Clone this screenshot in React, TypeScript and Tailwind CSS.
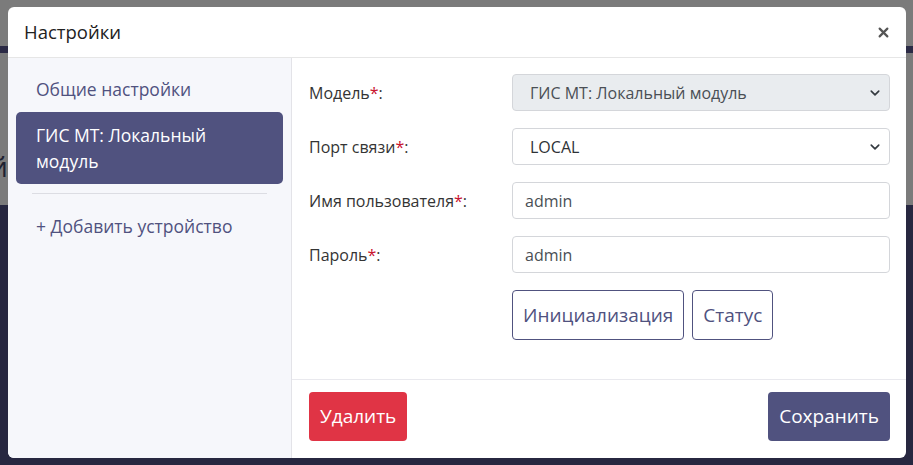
import React from "react";

const Chevron = () => (
  <svg width="12" height="10" viewBox="0 0 16 16" className="absolute right-[8px] top-1/2 -translate-y-1/2">
    <path d="M2 5l6 6 6-6" fill="none" stroke="#343a40" strokeWidth="2.6" strokeLinecap="round" strokeLinejoin="round" />
  </svg>
);

function Label({ text }: { text: string }) {
  return (
    <div className="w-[203px] shrink-0 text-[16px] text-[#343434]">
      {text}
      <span className="text-[#c8102e]">*</span>:
    </div>
  );
}

export default function App() {
  return (
    <div
      className="relative w-[913px] h-[465px] overflow-hidden bg-[#272740]"
      style={{ fontFamily: '"Open Sans", "Noto Sans", sans-serif' }}
    >
      <div className="flex flex-col">
        <div className="h-[46px] bg-[#7b7b7b]" />
        <div className="h-[7px] bg-[#2b2a45]" />
        <div className="h-[152px] bg-[#7b7b7b]" />
      </div>
      <span className="absolute left-[-10px] top-[146px] text-[28px] leading-[40px] text-[#1e2232]">й</span>

      <div className="absolute left-[8px] top-[7px] w-[898px] h-[451px] bg-white rounded-[6px] overflow-hidden flex flex-col">
        <div className="h-[51px] shrink-0 flex items-center justify-between pl-[16px] pr-[17px] border-b border-[#e6e6e6]">
          <div className="text-[18.5px] text-[#222]">Настройки</div>
          <svg width="11" height="11" viewBox="0 0 10 10">
            <path d="M1.5 1.5l7 7M8.5 1.5l-7 7" stroke="#555" strokeWidth="2" strokeLinecap="round" />
          </svg>
        </div>
        <div className="flex flex-1 min-h-0">
          <div className="w-[284px] shrink-0 bg-[#f6f7fb] border-r border-[#e3e3e8] px-[8px] pt-[8px]">
            <div className="px-[20px] py-[10px] leading-[26px] text-[17.5px] text-[#50527f]">Общие настройки</div>
            <div className="px-[20px] py-[10px] leading-[26px] text-[17.5px] text-white bg-[#50527f] rounded-[5px]">
              ГИС МТ: Локальный
              <br />
              модуль
            </div>
            <div className="mx-[16px] my-[9px] border-t border-[#dcdde3]" />
            <div className="px-[20px] py-[10px] leading-[26px] text-[17.5px] text-[#50527f]">+ Добавить устройство</div>
          </div>
          <div className="flex-1 flex flex-col">
            <div className="h-[322px] pl-[17px] pr-[16px] pt-[16px] flex flex-col gap-[17px] border-b border-[#e9e9ee]">
              <div className="flex items-center h-[37px]">
                <Label text="Модель" />
                <div className="relative flex-1 h-[37px] rounded-[4px] border border-[#d4d6da] bg-[#e9ecef] flex items-center pl-[17px] text-[16px] text-[#4a4f55]">
                  ГИС МТ: Локальный модуль
                  <Chevron />
                </div>
              </div>
              <div className="flex items-center h-[37px]">
                <Label text="Порт связи" />
                <div className="relative flex-1 h-[37px] rounded-[4px] border border-[#d4d6da] bg-white flex items-center pl-[17px] text-[16px] text-[#2e3236]">
                  LOCAL
                  <Chevron />
                </div>
              </div>
              <div className="flex items-center h-[37px]">
                <Label text="Имя пользователя" />
                <div className="flex-1 h-[37px] rounded-[4px] border border-[#d4d6da] bg-white flex items-center pl-[12px] text-[16px] text-[#4a4f55]">
                  admin
                </div>
              </div>
              <div className="flex items-center h-[37px]">
                <Label text="Пароль" />
                <div className="flex-1 h-[37px] rounded-[4px] border border-[#d4d6da] bg-white flex items-center pl-[12px] text-[16px] text-[#4a4f55]">
                  admin
                </div>
              </div>
              <div className="flex pl-[203px] gap-[8px]">
                <div className="h-[50px] px-[10px] flex items-center rounded-[4px] border border-[#50527f] text-[19px] text-[#50527f]">
                  Инициализация
                </div>
                <div className="h-[50px] px-[10px] flex items-center rounded-[4px] border border-[#50527f] text-[19px] text-[#50527f]">
                  Статус
                </div>
              </div>
            </div>
            <div className="flex justify-between pl-[17px] pr-[16px] pt-[12px]">
              <div className="h-[49px] px-[11px] flex items-center rounded-[4px] bg-[#e03445] text-white text-[19px]">Удалить</div>
              <div className="h-[49px] px-[11px] flex items-center rounded-[4px] bg-[#50527f] text-white text-[19px]">Сохранить</div>
            </div>
          </div>
        </div>
      </div>
    </div>
  );
}
